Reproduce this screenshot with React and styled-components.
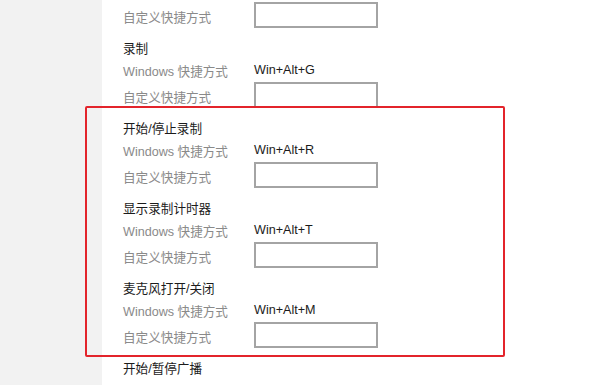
import React from "react";
import styled, { createGlobalStyle } from "styled-components";

const Global = createGlobalStyle`
  html, body { margin: 0; padding: 0; background: #ffffff; }
  body { font-family: "Liberation Sans", "Noto Sans CJK SC", sans-serif; }
`;

const Page = styled.div`
  position: relative;
  display: flex;
  width: 601px;
  height: 385px;
  overflow: hidden;
  background: #ffffff;
`;

const Sidebar = styled.div`
  flex: 0 0 102px;
  background: #f2f2f2;
`;

const Content = styled.div`
  flex: 1;
  padding-left: 21px;
`;

const List = styled.div`
  display: flex;
  flex-direction: column;
  padding-top: 1px;
`;

const Group = styled.section`
  display: flex;
  flex-direction: column;
  margin-bottom: 11px;
`;

const Heading = styled.div`
  height: 20px;
  line-height: 20px;
  font-size: 12.6px;
  color: #1b1b1b;
`;

const Row = styled.div`
  display: flex;
  align-items: center;
  height: ${(p) => (p.$input ? "26px" : "22px")};
  margin-top: ${(p) => (p.$input ? "1px" : "0")};
`;

const Label = styled.div`
  width: 131px;
  font-size: 12.6px;
  color: #8a8a8a;
  padding-top: ${(p) => (p.$input ? "3px" : "0")};
`;

const Value = styled.div`
  font-size: 12.6px;
  color: #1b1b1b;
`;

const Input = styled.div`
  box-sizing: border-box;
  width: 124px;
  height: 26px;
  border: 2px solid #a4a4a4;
  background: #ffffff;
`;

const Highlight = styled.div`
  position: absolute;
  left: 85px;
  top: 106px;
  width: 420px;
  height: 251px;
  box-sizing: border-box;
  border: 2px solid #e3242b;
  border-radius: 2px;
  pointer-events: none;
`;

const groups = [
  { title: null, keys: null, custom: true },
  { title: "录制", keys: "Win+Alt+G", custom: true },
  { title: "开始/停止录制", keys: "Win+Alt+R", custom: true },
  { title: "显示录制计时器", keys: "Win+Alt+T", custom: true },
  { title: "麦克风打开/关闭", keys: "Win+Alt+M", custom: true },
  { title: "开始/暂停广播", keys: null, custom: false },
];

export default function App() {
  return (
    <>
      <Global />
      <Page>
        <Sidebar />
        <Content>
          <List>
            {groups.map((g, i) => (
              <Group key={i}>
                {g.title && <Heading>{g.title}</Heading>}
                {g.keys && (
                  <Row>
                    <Label>Windows 快捷方式</Label>
                    <Value>{g.keys}</Value>
                  </Row>
                )}
                {g.custom && (
                  <Row $input>
                    <Label $input>自定义快捷方式</Label>
                    <Input />
                  </Row>
                )}
              </Group>
            ))}
          </List>
        </Content>
        <Highlight />
      </Page>
    </>
  );
}
